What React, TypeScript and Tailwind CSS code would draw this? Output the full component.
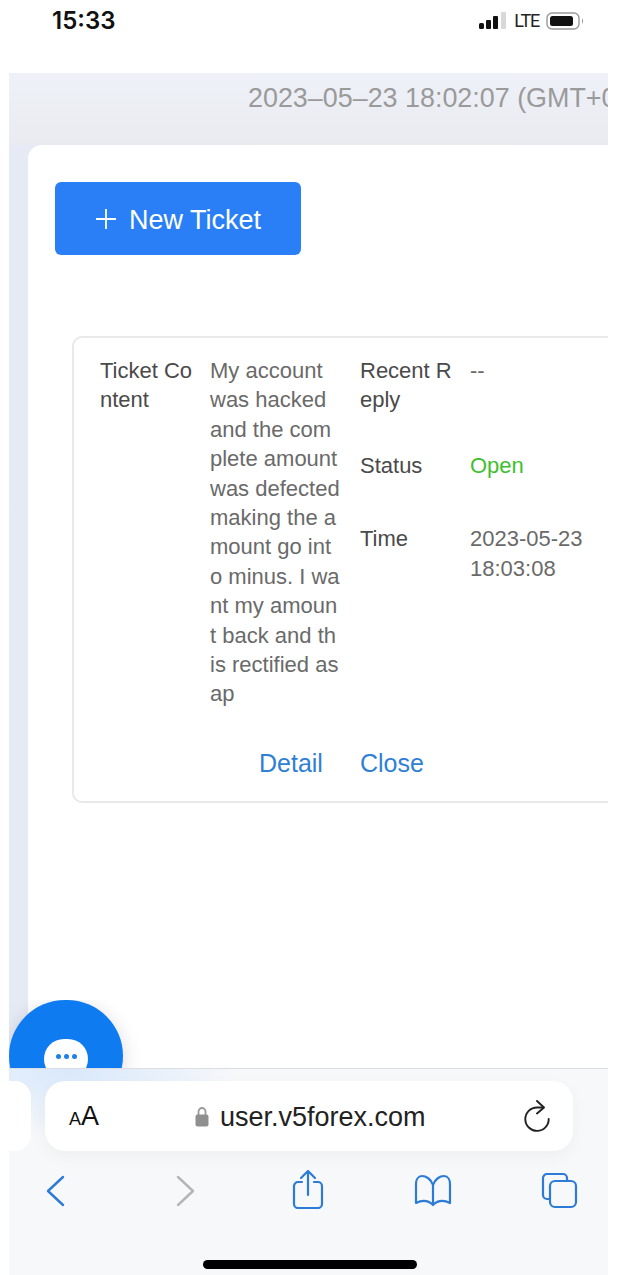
import React from "react";

const sans = "font-['Liberation_Sans',Arial,sans-serif]";

function Row({ label, children, className = "" }: { label: React.ReactNode; children: React.ReactNode; className?: string }) {
  return (
    <div className={`flex ${className}`}>
      <div className="w-[110px] shrink-0 break-all pr-[14px] text-[#4a4a4a]">{label}</div>
      <div className="w-[130px] shrink-0">{children}</div>
    </div>
  );
}

export default function App() {
  return (
    <div className={`${sans} relative flex h-[1275px] w-[618px] flex-col overflow-hidden bg-white`}>
      {/* Status bar */}
      <div className="flex h-[73px] shrink-0 items-start justify-between pl-[52px] pr-[33px] pt-[5px]">
        <span className="font-['Inter',sans-serif] text-[24px] font-semibold leading-[32px] text-[#111]">15:33</span>
        <div className="flex items-center pt-[7px]">
          <svg width="27" height="18" viewBox="0 0 27 18">
            <rect x="0" y="11" width="5" height="6" rx="1.5" fill="#111" />
            <rect x="7" y="8" width="5" height="9" rx="1" fill="#111" />
            <rect x="14" y="4" width="5" height="13" rx="1" fill="#111" />
            <rect x="22" y="0" width="5" height="17" rx="1" fill="#d8d8d8" />
          </svg>
          <span className="ml-[8px] font-['Roboto',sans-serif] text-[18px] leading-[18px] tracking-[-1.2px] text-[#222]">LTE</span>
          <svg width="39" height="18" viewBox="0 0 39 18" className="ml-[7px]">
            <rect x="1" y="1" width="32" height="16" rx="5" fill="none" stroke="#999" strokeWidth="1.4" />
            <rect x="4" y="4" width="23" height="10" rx="2.5" fill="#111" />
            <path d="M36 6.500c1.400.5 1.400 4.500 0 5z" fill="#999" />
          </svg>
        </div>
      </div>

      {/* Page */}
      <div className="ml-[9px] h-[995px] w-[599px] shrink-0 overflow-hidden bg-gradient-to-r from-[#e6eaf5] to-[#f1f3f8]">
        <div className="flex h-[72px] items-start whitespace-nowrap bg-gradient-to-b from-[#eff1f8] to-[#e9ebf1] pl-[239px] pt-[10px] text-[26.9px] font-light leading-[30px] text-[#9a9a9a]">
          2023–05–23 18:02:07 (GMT+08:00)
        </div>
        <div className="ml-[19px] h-[923px] overflow-hidden rounded-tl-[14px] bg-white pl-[27px] pt-[37px]">
          <button className="flex h-[73px] w-[246px] items-center justify-center gap-[12px] rounded-[6px] bg-[#2a7ff7] pt-[3px] text-[27px] text-white">
            <svg width="22" height="22" viewBox="0 0 22 22" className="-mt-[3px]">
              <path d="M11 1v20M1 11h20" stroke="#fff" strokeWidth="1.8" />
            </svg>
            New Ticket
          </button>

          <div className="ml-[17px] mt-[81px] w-[600px] rounded-[10px] border-2 border-[#e9e9e9] pb-[23px] pl-[26px] pt-[18px] text-[22px] leading-[29.4px]">
            <div className="flex">
              <Row label="Ticket Content">
                <div className="w-[130.5px] break-all text-[#6a6a6a]">
                  My account was hacked and the complete amount was defected making the amount go into minus. I want my amount back and this rectified asap
                </div>
              </Row>
              <div className="ml-[20px]">
                <Row label="Recent Reply">
                  <span className="text-[#6a6a6a]">--</span>
                </Row>
                <Row label="Status" className="mt-[36px]">
                  <span className="text-[#3fbf2f]">Open</span>
                </Row>
                <Row label="Time" className="mt-[44px]">
                  <span className="text-[#6a6a6a]">2023-05-23 18:03:08</span>
                </Row>
              </div>
            </div>
            <div className="ml-[159px] mt-[39px] flex gap-[37px] text-[25px] leading-[30px] text-[#2f7fd6]">
              <span>Detail</span>
              <span>Close</span>
            </div>
          </div>
        </div>
      </div>

      {/* Safari toolbar */}
      <div className="ml-[9px] h-[207px] w-[599px] shrink-0 border-t border-[#dcdde0] bg-[#f7f8fa] bg-[radial-gradient(ellipse_170px_70px_at_60px_0,#d8e8fb,transparent)] pt-[12px]">
        <div className="flex h-[70px] gap-[14px]">
          <div className="h-full w-[22px] shrink-0 rounded-r-[16px] bg-white" />
          <div className="flex h-full w-[528px] shrink-0 items-center rounded-[20px] bg-white pl-[24px] pr-[21px] shadow-[0_6px_18px_rgba(0,0,0,0.04)]">
            <span className="flex w-[126px] items-baseline text-[#111]">
              <span className="text-[18px]">A</span>
              <span className="text-[27px]">A</span>
            </span>
            <svg width="14" height="21" viewBox="0 0 14 21" className="mr-[11px]">
              <path d="M3.500 9V5.500a3.500 3.500 0 0 1 7 0V9" fill="none" stroke="#999" strokeWidth="1.8" />
              <rect x="0.5" y="8.5" width="13" height="12" rx="2" fill="#8f8f8f" />
            </svg>
            <span className="pt-[1px] text-[27px] leading-[32px] text-[#222]">user.v5forex.com</span>
            <svg width="28" height="32" viewBox="0 0 28 32" className="ml-auto">
              <path d="M19 7.500H13A11.700 11.700 0 1 0 24.700 19" fill="none" stroke="#222" strokeWidth="1.9" strokeLinecap="round" />
              <path d="M13 1l7 6.500-7 6" fill="none" stroke="#222" strokeWidth="1.9" strokeLinecap="round" strokeLinejoin="round" />
            </svg>
          </div>
        </div>

        <div className="mt-[18px] flex items-start pl-[35px]">
          <svg width="24" height="34" viewBox="0 0 24 34" className="mt-[5px] shrink-0">
            <path d="M19 3L4 17l15 14" fill="none" stroke="#2c7bd6" strokeWidth="2.4" strokeLinecap="round" strokeLinejoin="round" />
          </svg>
          <svg width="24" height="34" viewBox="0 0 24 34" className="ml-[105px] mt-[5px] shrink-0">
            <path d="M5 3l15 14L5 31" fill="none" stroke="#b5b5b5" strokeWidth="2.4" strokeLinecap="round" strokeLinejoin="round" />
          </svg>
          <svg width="32" height="40" viewBox="0 0 32 40" className="ml-[95px] shrink-0">
            <path d="M10 13H6a4 4 0 0 0-4 4v18a4 4 0 0 0 4 4h20a4 4 0 0 0 4-4V17a4 4 0 0 0-4-4h-4" fill="none" stroke="#2c7bd6" strokeWidth="2.200" strokeLinecap="round" />
            <path d="M16 26V2M9 9l7-7 7 7" fill="none" stroke="#2c7bd6" strokeWidth="2.200" strokeLinecap="round" strokeLinejoin="round" />
          </svg>
          <svg width="38" height="34" viewBox="0 0 38 34" className="ml-[90px] mt-[5px] shrink-0">
            <path d="M19 11C17 5 12 2 8 2C4 2 2 6 2 10V29C8 26 14 26 19 31C24 26 30 26 36 29V10C36 6 34 2 30 2C26 2 21 5 19 11V31" fill="none" stroke="#2c7bd6" strokeWidth="2.200" strokeLinejoin="round" />
          </svg>
          <svg width="37" height="37" viewBox="0 0 37 37" className="ml-[89px] mt-[3px] shrink-0">
            <path d="M8 27H6a4 4 0 0 1-4-4V6a4 4 0 0 1 4-4h16a4 4 0 0 1 4 4v2" fill="none" stroke="#2c7bd6" strokeWidth="2.200" />
            <rect x="9" y="9" width="26" height="26" rx="5" fill="none" stroke="#2c7bd6" strokeWidth="2.200" />
          </svg>
        </div>
        <div className="mx-auto mt-[51px] h-[9px] w-[214px] translate-x-[1px] rounded-full bg-black" />
      </div>

      {/* Chat bubble, clipped by the toolbar */}
      <div className="absolute left-[9px] top-[1000px] h-[68px] w-[140px] overflow-hidden">
        <div className="h-[112px] w-[114px] rounded-[57px] bg-[#0f7bf0] shadow-[0_4px_20px_rgba(0,0,0,0.15)]">
          <div className="absolute left-[35px] top-[39px] flex h-[40px] w-[44px] justify-center gap-[3px] rounded-full bg-white pt-[15px]">
            <i className="h-[5px] w-[5px] rounded-full bg-[#1f7fe8]" />
            <i className="h-[5px] w-[5px] rounded-full bg-[#1f7fe8]" />
            <i className="h-[5px] w-[5px] rounded-full bg-[#1f7fe8]" />
          </div>
        </div>
      </div>
    </div>
  );
}
